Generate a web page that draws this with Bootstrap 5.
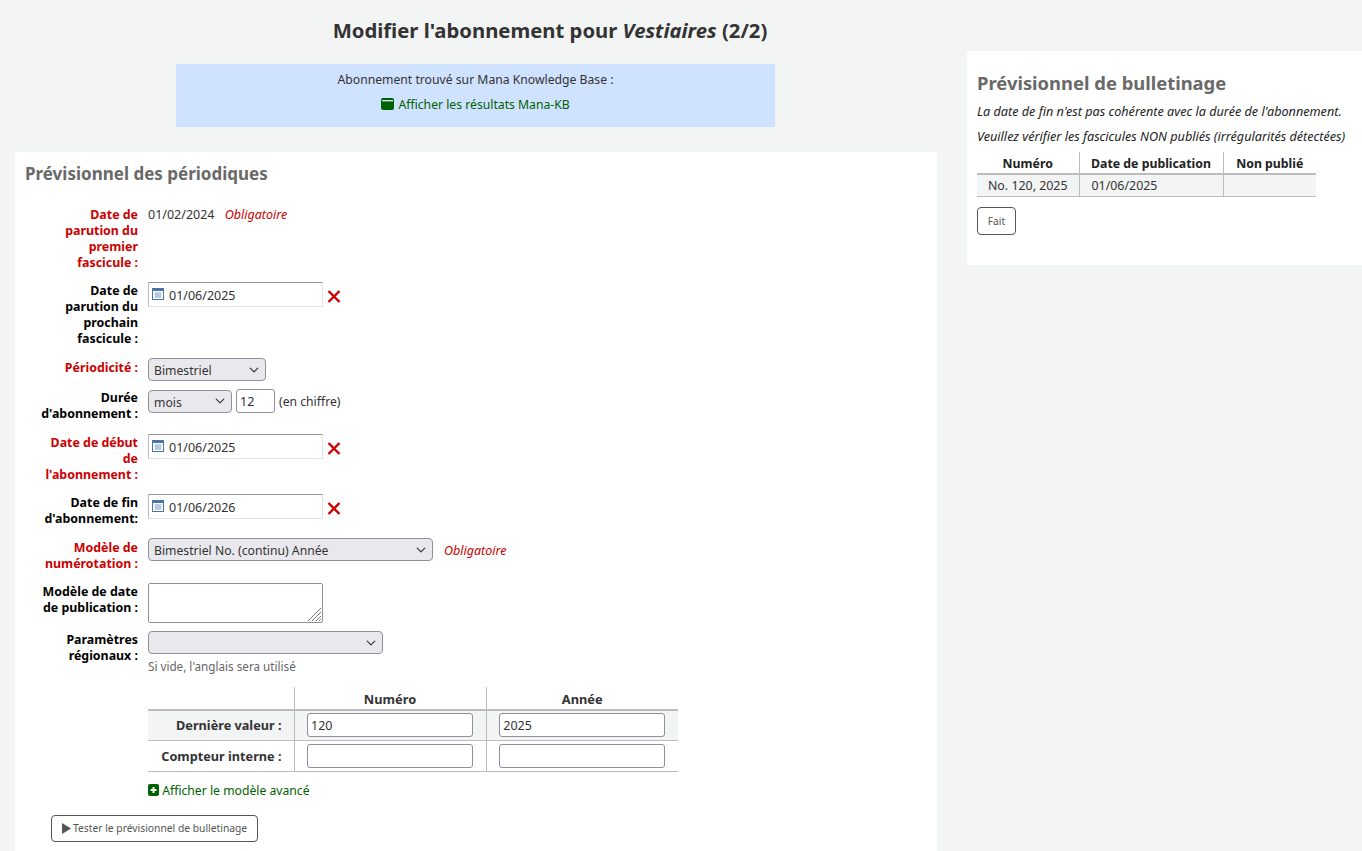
<!DOCTYPE html>
<html lang="fr">

<head>
  <meta charset="UTF-8" />
  <title>Modifier l'abonnement</title>
  <link href="https://cdn.jsdelivr.net/npm/bootstrap@5.3.2/dist/css/bootstrap.min.css" rel="stylesheet" />
  <style>
    body { background: #f3f4f4; color: #333; font-family: "Noto Sans", sans-serif; font-size: 12.5px; line-height: 16px; }
    .page-wrap { display: flex; align-items: flex-start; padding-left: 15px; }
    .left-side { width: 922px; flex: none; }
    .right-side { width: 395px; flex: none; margin-left: 30px; margin-top: 51px; background: #fff; padding: 19px 10px 30px 10px; height: 214px; }
    .page-title { width: 1070px; margin: 17px 0 21px 0; text-align: center; font-size: 20.3px; line-height: 26px; font-weight: 700; color: #333; }
    .mana-box { width: 599px; height: 63px; margin: 0 0 25px 161px; padding-top: 8px; background: #cfe2ff; text-align: center; font-size: 12.2px; }
    .mana-box p { margin: 0 0 9px 0; }
    .green-link { color: #006100; text-decoration: none; font-size: 12.2px; }
    .main-card { background: #fff; padding: 10px 10px 9px 10px; height: 699px; }
    .sect-title { color: #696969; font-weight: 700; font-size: 17px; line-height: 24px; margin: 0 0 21px 0; }
    .side-title { color: #696969; font-weight: 700; font-size: 18.4px; line-height: 26px; margin: 0 0 7px 0; }
    .fld { display: flex; gap: 10px; align-items: flex-start; }
    .fld-lbl { width: 98px; margin: 0 0 0 15px; padding-top: 1px; flex: none; text-align: right; font-weight: 700; font-size: 12.4px; color: #000; }
    .fld-lbl.req { color: #c00; }
    .lbl-first { padding-top: 0; }
    .lbl-two { padding-top: 2px; }
    .req-note { color: #c00; font-style: italic; }
    .note-first { margin-left: 7px; }
    .note-model { margin: 5px 0 0 1px; }
    .unit-txt { font-size: 12.2px; padding-top: 1px; }
    .date-wrap { position: relative; width: 175px; flex: none; }
    .date-wrap svg { position: absolute; left: 4px; top: 6px; }
    .date-inp { width: 175px; height: 25px; padding: 1px 0 0 20px; font-size: 12.5px; color: #333; border-width: 1px; border-style: solid; border-color: #999 #e3e3e3 #e3e3e3 #bbb; border-radius: 0; }
    .sel-plain { height: 23px; padding: 1px 20px 0 5px; font-size: 12.2px; line-height: 21px; color: #333; background-color: #e9e9ed; border: 1px solid #8f8f9d; border-radius: 4px; background-position: right 5px center; background-size: 12px 10px; }
    .txt-inp { height: 24px; padding: 0 3px; font-size: 12.5px; color: #333; border: 1px solid #8f8f9d; border-radius: 3px; }
    .area-wrap { position: relative; width: 175px; height: 40px; flex: none; }
    .area-wrap svg { position: absolute; right: 2px; bottom: 2px; pointer-events: none; }
    .area-inp { width: 175px; height: 40px; padding: 2px 5px; border: 1px solid #8f8f9d; border-radius: 2px; font-size: 12.5px; resize: none; }
    .clear-x { margin: 8px 0 0 -6px; flex: none; }
    .hint-txt { color: #666; margin-top: 4px; font-size: 11.7px; }
    .num-table { margin: 13px 0 0 123px; width: 530px; table-layout: fixed; border-collapse: collapse; color: #333; }
    .num-table th, .num-table td { padding: 0; border-left: 1px solid #bcbcbc; }
    .num-table th:first-child, .num-table td:first-child, .num-table tbody th { border-left: 0; }
    .num-table thead th { height: 23px; text-align: center; border-bottom: 2px solid #bcbcbc; font-size: 12.8px; vertical-align: bottom; padding-bottom: 2px; }
    .num-table tbody th { text-align: right; padding-right: 12px; font-size: 12.7px; border-right: 1px solid #bcbcbc; }
    .num-table tbody tr { height: 31px; border-bottom: 1px solid #bcbcbc; }
    .num-table tbody tr:first-child { background: #f3f4f4; height: 30px; }
    .num-table td { text-align: center; }
    .num-table .txt-inp { width: 166px; }
    .test-btn { margin: 16px 0 0 26px; height: 27px; padding: 0 10px; background: #fff; border: 1px solid #555; border-radius: 4px; font-size: 10.3px; color: #555; display: inline-flex; align-items: center; gap: 2px; }
    .prev-table { width: 339px; table-layout: fixed; border-collapse: collapse; color: #333; font-size: 12.4px; }
    .prev-table th, .prev-table td { padding: 0; border-left: 1px solid #bcbcbc; }
    .prev-table th:first-child, .prev-table td:first-child { border-left: 0; }
    .prev-table thead th { height: 22px; padding-top: 2px; text-align: center; border-bottom: 2px solid #bcbcbc; font-size: 12.3px; color: #222; }
    .prev-table td { height: 22px; padding: 2px 0 0 12px; background: #f3f4f4; border-bottom: 1px solid #bcbcbc; }
    .prev-table td:first-child { text-align: center; padding-left: 0; }
    .done-btn { margin-top: 10px; width: 39px; height: 28px; padding: 0; background: #fff; border: 1px solid #555; border-radius: 4px; font-size: 10.25px; color: #555; }
    .side-note { margin: 0 0 9px 0; font-style: italic; font-size: 12.65px; color: #222; white-space: nowrap; }
    .side-note-last { margin-bottom: 8px; }
    .mana-ico { margin-right: 1px; vertical-align: -1px; }
    .adv-ico { vertical-align: -1px; }
    #row-first { margin-bottom: 11px; }
    #row-next { margin-bottom: 11px; }
    #row-period { margin-bottom: 8px; }
    #row-duree { margin-bottom: 12px; }
    #row-debut { margin-bottom: 11px; }
    #row-fin { margin-bottom: 11px; }
    #row-modele { margin-bottom: 11px; }
    #row-pub { margin-bottom: 8px; }
    #sel-period { width: 118px; }
    #sel-unit { width: 84px; }
    #inp-len { width: 39px; }
    #sel-model { width: 285px; }
    #sel-locale { width: 235px; }
    #c1 { width: 146px; } #c2 { width: 192px; } #c3 { width: 192px; }
    #p1 { width: 102px; } #p2 { width: 144px; } #p3 { width: 93px; }
    .adv-link { margin: 11px 0 0 123px; }
  </style>
</head>

<body>
  <div class="page-wrap">
    <div class="left-side">
      <h1 class="page-title">Modifier l'abonnement pour <em>Vestiaires</em> (2/2)</h1>

      <div class="mana-box">
        <p>Abonnement trouvé sur Mana Knowledge Base :</p>
        <a class="green-link" href="#">
          <svg class="mana-ico" width="13" height="12" viewBox="0 0 13 12"><rect width="13" height="12" rx="2" fill="#006100" /><rect x="1" y="2" width="11" height="1.4" fill="#cfe2ff" /></svg>
          Afficher les résultats Mana-KB
        </a>
      </div>

      <div class="main-card">
        <h2 class="sect-title">Prévisionnel des périodiques</h2>

        <div class="fld" id="row-first">
          <div class="fld-lbl req lbl-first">Date de parution du premier fascicule :</div>
          <div>01/02/2024 <span class="req-note note-first">Obligatoire</span></div>
        </div>

        <div class="fld" id="row-next">
          <div class="fld-lbl">Date de parution du prochain fascicule :</div>
          <div class="date-wrap">
            <svg width="12" height="12" viewBox="0 0 12 12"><rect x="0.5" y="0.5" width="11" height="11" fill="#fff" stroke="#4a76a8" /><rect x="1" y="1" width="10" height="2" fill="#4a76a8" /><path d="M2.5 5h7M2.5 7h7M2.5 9h7M4 4.5v5M6 4.5v5M8 4.5v5" stroke="#9db5d0" stroke-width="1" /></svg>
            <input class="date-inp" type="text" value="01/06/2025" />
          </div>
          <svg class="clear-x" width="14" height="13" viewBox="0 0 14 13"><path d="M1.5 1l11 11M12.5 1l-11 11" stroke="#c00" stroke-width="2.4" /></svg>
        </div>

        <div class="fld" id="row-period">
          <div class="fld-lbl req lbl-two">Périodicité :</div>
          <select class="form-select sel-plain" id="sel-period"><option>Bimestriel</option></select>
        </div>

        <div class="fld" id="row-duree">
          <div class="fld-lbl">Durée d'abonnement :</div>
          <div class="d-flex align-items-center gap-1">
            <select class="form-select sel-plain" id="sel-unit"><option>mois</option></select>
            <input class="form-control txt-inp" id="inp-len" type="text" value="12" />
            <span class="unit-txt">(en chiffre)</span>
          </div>
        </div>

        <div class="fld" id="row-debut">
          <div class="fld-lbl req">Date de début de l'abonnement :</div>
          <div class="date-wrap">
            <svg width="12" height="12" viewBox="0 0 12 12"><rect x="0.5" y="0.5" width="11" height="11" fill="#fff" stroke="#4a76a8" /><rect x="1" y="1" width="10" height="2" fill="#4a76a8" /><path d="M2.5 5h7M2.5 7h7M2.5 9h7M4 4.5v5M6 4.5v5M8 4.5v5" stroke="#9db5d0" stroke-width="1" /></svg>
            <input class="date-inp" type="text" value="01/06/2025" />
          </div>
          <svg class="clear-x" width="14" height="13" viewBox="0 0 14 13"><path d="M1.5 1l11 11M12.5 1l-11 11" stroke="#c00" stroke-width="2.4" /></svg>
        </div>

        <div class="fld" id="row-fin">
          <div class="fld-lbl">Date de fin d'abonnement:</div>
          <div class="date-wrap">
            <svg width="12" height="12" viewBox="0 0 12 12"><rect x="0.5" y="0.5" width="11" height="11" fill="#fff" stroke="#4a76a8" /><rect x="1" y="1" width="10" height="2" fill="#4a76a8" /><path d="M2.5 5h7M2.5 7h7M2.5 9h7M4 4.5v5M6 4.5v5M8 4.5v5" stroke="#9db5d0" stroke-width="1" /></svg>
            <input class="date-inp" type="text" value="01/06/2026" />
          </div>
          <svg class="clear-x" width="14" height="13" viewBox="0 0 14 13"><path d="M1.5 1l11 11M12.5 1l-11 11" stroke="#c00" stroke-width="2.4" /></svg>
        </div>

        <div class="fld" id="row-modele">
          <div class="fld-lbl req lbl-two">Modèle de numérotation :</div>
          <select class="form-select sel-plain" id="sel-model"><option>Bimestriel No. (continu) Année</option></select>
          <span class="req-note note-model">Obligatoire</span>
        </div>

        <div class="fld" id="row-pub">
          <div class="fld-lbl">Modèle de date de publication :</div>
          <div class="area-wrap">
            <textarea class="form-control area-inp"></textarea>
            <svg width="13" height="13" viewBox="0 0 13 13"><path d="M0 13L13 0M4 13L13 4M8 13l5-5M11 13l2-2" stroke="#777" stroke-width="1" fill="none" /></svg>
          </div>
        </div>

        <div class="fld" id="row-locale">
          <div class="fld-lbl">Paramètres régionaux :</div>
          <div>
            <select class="form-select sel-plain" id="sel-locale"><option></option></select>
            <div class="hint-txt">Si vide, l'anglais sera utilisé</div>
          </div>
        </div>

        <table class="num-table">
          <colgroup><col id="c1" /><col id="c2" /><col id="c3" /></colgroup>
          <thead>
            <tr><th></th><th>Numéro</th><th>Année</th></tr>
          </thead>
          <tbody>
            <tr>
              <th>Dernière valeur :</th>
              <td><input class="form-control txt-inp d-inline-block" type="text" value="120" /></td>
              <td><input class="form-control txt-inp d-inline-block" type="text" value="2025" /></td>
            </tr>
            <tr>
              <th>Compteur interne :</th>
              <td><input class="form-control txt-inp d-inline-block" type="text" /></td>
              <td><input class="form-control txt-inp d-inline-block" type="text" /></td>
            </tr>
          </tbody>
        </table>

        <div class="adv-link">
          <a class="green-link" href="#">
            <svg class="adv-ico" width="11" height="12" viewBox="0 0 11 12"><rect width="11" height="12" rx="2" fill="#006100" /><path d="M5.5 3v6M2.5 6h6" stroke="#fff" stroke-width="2" /></svg>
            Afficher le modèle avancé
          </a>
        </div>

        <button class="test-btn" type="button">
          <svg width="9" height="11" viewBox="0 0 9 11"><path d="M0 0l9 5.5L0 11z" fill="#555" /></svg>
          Tester le prévisionnel de bulletinage
        </button>
      </div>
    </div>

    <div class="right-side">
      <h2 class="side-title">Prévisionnel de bulletinage</h2>
      <p class="side-note">La date de fin n'est pas cohérente avec la durée de l'abonnement.</p>
      <p class="side-note side-note-last">Veuillez vérifier les fascicules NON publiés (irrégularités détectées)</p>
      <table class="prev-table">
        <colgroup><col id="p1" /><col id="p2" /><col id="p3" /></colgroup>
        <thead>
          <tr><th>Numéro</th><th>Date de publication</th><th>Non publié</th></tr>
        </thead>
        <tbody>
          <tr><td>No. 120, 2025</td><td>01/06/2025</td><td></td></tr>
        </tbody>
      </table>
      <button class="done-btn" type="button">Fait</button>
    </div>
  </div>

  <script src="https://cdn.jsdelivr.net/npm/bootstrap@5.3.2/dist/js/bootstrap.bundle.min.js"></script>
</body>

</html>
